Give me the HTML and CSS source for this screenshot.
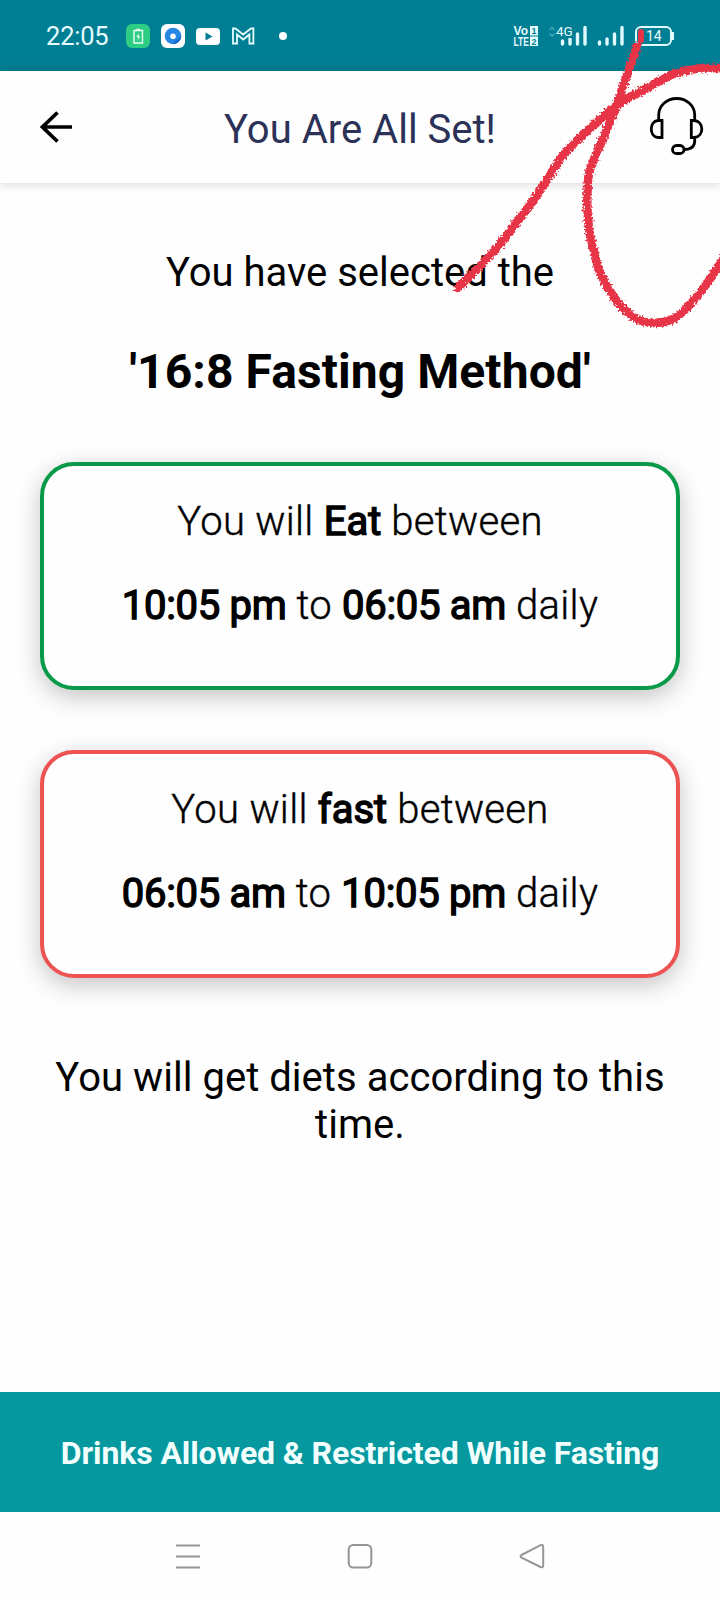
FILE: index.html
```html
<!DOCTYPE html>
<html lang="en">
<head>
<meta charset="utf-8">
<title>You Are All Set!</title>
<link rel="stylesheet" href="styles.css">
</head>
<body>
<div class="screen">
  <div class="status">
    <span class="clock">22:05</span>
    <svg class="status-left" width="164" height="26" viewBox="125 22 164 26">
      <rect x="126" y="23" width="24" height="24" rx="6" fill="#2dcd83"/>
      <path d="M134 29.500h8.500v12.500h-8.500zM136.500 28.500h3.500" fill="none" stroke="#e9fff5" stroke-width="1.400"/>
      <path d="M138.800 32l-2.600 4h2l-.6 3.500 2.800-4.300h-2z" fill="#e9fff5"/>
      <rect x="161" y="23" width="24" height="24" rx="6" fill="#fff"/>
      <circle cx="173" cy="35" r="8.300" fill="#2688e3"/>
      <path d="M173 43.300a8.300 8.300 0 0 0 8.300-8.300c-3 4-6 3-8.300 8.300z" fill="#156bd0"/>
      <circle cx="173" cy="35.300" r="2.800" fill="#fff"/>
      <rect x="196" y="27" width="24" height="17" rx="4" fill="#fff"/>
      <path d="M205.500 31.500v8l7-4z" fill="#007d93"/>
      <path d="M233 42.500v-15h2.500l7.700 6 7.700-6h2.500v15h-4v-9l-6.200 5-6.200-5v9z" fill="none" stroke="#e6fcff" stroke-width="1.800"/>
      <circle cx="283" cy="35" r="4" fill="#fff"/>
    </svg>
    <div class="status-right">
      <svg class="volte" width="25" height="24" viewBox="513 23 25 24">
        <rect x="530" y="25" width="8" height="9.500"/><rect x="530" y="35.500" width="8" height="9.500"/>
        <text x="513.500" y="34" textLength="14.500" lengthAdjust="spacingAndGlyphs">Vo</text>
        <text x="513.500" y="45" textLength="15.500" lengthAdjust="spacingAndGlyphs">LTE</text>
        <text class="sim" x="534" y="33">1</text>
        <text class="sim" x="534" y="43.500">2</text>
      </svg>
      <div class="network">
        <svg width="39" height="24" viewBox="547 23 39 24">
          <path d="M548.500 29l2.500-2.500 2.500 2.500M548.500 32.500l2.500 2.500 2.500-2.500" fill="none" stroke="#4faab8" stroke-width="1.300"/>
          <path d="M561.500 40v3M569 38v5M576.500 33v10M584 26.500v16.500" stroke="#e0fbff" stroke-width="3.400" stroke-linecap="round"/>
        </svg>
        <span class="gen">4G</span>
      </div>
      <svg width="28" height="24" viewBox="597 23 28 24"><path d="M599.500 41v2M607 38v5M614.500 33v10M622 26.500v16.500" stroke="#e0fbff" stroke-width="3.400" stroke-linecap="round"/></svg>
      <div class="battery"><i class="level"></i>14</div>
    </div>
  </div>

  <header class="topbar">
    <svg width="34" height="34" viewBox="40 110 34 34"><path d="M72 127H42M57.500 112.500L42.500 127l15 14.500" fill="none" stroke="#000" stroke-width="3.700"/></svg>
    <h1 class="title">You Are All Set!</h1>
    <svg class="support" width="56" height="60" viewBox="649 95 56 60" fill="none" stroke="#000" stroke-width="2.800">
      <path d="M658.700 119v-5a18 16.500 0 0 1 36 0v5M662 119.500h-4c-9 1-9 16 0 17h4zM691.300 119.500h3c10 1 10 16 0 17h-3zM694.700 137v3c0 6-4 8.500-11 8.500"/>
      <rect x="672.500" y="144.500" width="11.500" height="8" rx="4"/>
    </svg>
  </header>

  <main class="content">
    <p class="lead">You have selected the</p>
    <h2 class="method">'16:8 Fasting Method'</h2>
    <section class="card eat">
      <p>You will <b>Eat</b> between</p>
      <p class="hours"><b>10:05 pm</b> to <b>06:05 am</b> daily</p>
    </section>
    <section class="card fast">
      <p>You will <b>fast</b> between</p>
      <p class="hours"><b>06:05 am</b> to <b>10:05 pm</b> daily</p>
    </section>
    <p class="note">You will get diets according to this time.</p>
  </main>

  <div class="action">Drinks Allowed &amp; Restricted While Fasting</div>
  <nav class="nav">
    <svg width="26" height="26" viewBox="0 0 26 26"><path d="M1 2.500h24M1 13.500h24M1 24.500h24"/></svg>
    <svg width="26" height="26" viewBox="0 0 26 26"><rect x="1.700" y="2" width="22.600" height="22.600" rx="4.500"/></svg>
    <svg width="26" height="26" viewBox="0 0 26 26"><path d="M2.500 12L21.500 2.200Q24.200 1.200 24.200 4V22.500Q24.200 25.200 21.500 24L2.500 14.700Q.5 13.300 2.500 12z"/></svg>
  </nav>

  <svg class="scribble" width="720" height="340" viewBox="0 0 720 340">
    <filter id="rough" x="-10%" y="-10%" width="120%" height="120%">
      <feTurbulence type="fractalNoise" baseFrequency=".5" numOctaves="2" seed="4"/>
      <feDisplacementMap in="SourceGraphic" scale="7" xChannelSelector="R" yChannelSelector="G"/>
    </filter>
    <g filter="url(#rough)">
      <path d="M458 288C469 276 480 267 491 254C501 244 509 233 518 220C528 209 536 197 544 184C551 174 557 163 564 154C573 143 584 134 594 125L612 109C618 104 622 102 628 98C642 91 654 84 671 75C688 68 704 68 728 68"/>
      <path d="M637 46C634 56 631 63 628 72C624 83 621 91 618 102C614 112 610 121 606 132C602 142 597 150 594 159C590 169 588 174 588 182C587 195 587 206 588 218C589 231 591 241 594 251C596 262 599 272 604 281C608 289 613 296 619 304C625 310 629 315 635 318C641 321 647 323 654 323C663 323 671 321 678 316C686 310 692 302 698 295C707 285 715 272 724 257"/>
    </g>
  </svg>
</div>
</body>
</html>
```
FILE: styles.css
```css
* { box-sizing: border-box; }
body { margin: 0; background: #fff; }
p, h1, h2 { margin: 0; }
.screen {
  position: relative;
  width: 720px;
  height: 1600px;
  display: flex;
  flex-direction: column;
  overflow: hidden;
  background: #fefefe;
  color: #000;
  font-family: Roboto, sans-serif;
}
.status {
  height: 71px;
  flex: none;
  display: flex;
  align-items: center;
  padding: 0 48px 0 46px;
  background: #007e93;
  color: #e6fcff;
}
.clock { width: 79px; font-size: 25.500px; line-height: 30px; letter-spacing: -.2px; white-space: nowrap; }
.status-left { display: block; }
.status-right { margin-left: auto; display: flex; align-items: center; gap: 10px; }
.volte { fill: #e6fcff; font: bold 13px "Liberation Sans", sans-serif; }
.volte .sim { fill: #007e93; font-size: 9px; text-anchor: middle; }
.network { position: relative; height: 24px; }
.gen { position: absolute; left: 8px; top: 1px; font-size: 13.500px; line-height: 13px; background: #007e93; }
.battery {
  position: relative;
  width: 37px;
  height: 20px;
  border: 2px solid #e0fbff;
  border-radius: 6px;
  font-size: 14px;
  line-height: 16px;
  display: flex;
  align-items: center;
  gap: 2px;
  padding-left: 1px;
}
.level { width: 6px; height: 14px; border-radius: 3px; background: #e73547; }
.battery::after { content: ""; position: absolute; right: -4px; top: 4px; width: 2px; height: 8px; background: #e0fbff; }
.topbar {
  height: 112px;
  flex: none;
  display: flex;
  align-items: center;
  justify-content: space-between;
  padding: 0 15px 0 40px;
  background: #fefefe;
  box-shadow: 0 1px 10px rgba(0,0,0,.17);
}
.title { font-size: 40px; line-height: 47px; font-weight: 400; color: #2b3157; white-space: nowrap; padding: 4px 3px 0 0; }
.support { margin-top: -3px; }
.content { flex: 1; padding: 66px 40px 0; text-align: center; font-size: 40px; line-height: 47px; }
.lead, .method, .card p { white-space: nowrap; }
.method { margin-top: 48px; font-size: 48px; line-height: 56px; letter-spacing: .08px; }
.card {
  height: 228px;
  padding-top: 32px;
  border: 4px solid;
  border-radius: 34px;
  background: #fefefe;
  box-shadow: 0 7px 24px rgba(0,0,0,.23);
  font-weight: 300;
  letter-spacing: .3px;
  -webkit-text-stroke: .4px #000;
}
.card b { font-weight: 400; letter-spacing: 0; -webkit-text-stroke: 1.400px #000; }
.card .hours b { letter-spacing: -.3px; }
.eat { margin-top: 62px; border-color: #089a48; }
.fast { margin-top: 60px; border-color: #ee5353; }
.hours { margin-top: 37px; }
.note { margin-top: 76px; letter-spacing: .04px; }
.action {
  height: 120px;
  flex: none;
  display: flex;
  align-items: center;
  justify-content: center;
  padding-top: 2px;
  background: #05989f;
  color: #f2ffff;
  font-size: 32px;
  font-weight: 700;
  letter-spacing: -.11px;
  white-space: nowrap;
}
.nav { height: 88px; flex: none; display: flex; align-items: center; justify-content: space-between; padding: 0 175px; }
.nav svg { fill: none; stroke: #969696; stroke-width: 2; }
.scribble { position: absolute; left: 0; top: 0; pointer-events: none; }
.scribble path { fill: none; stroke: #e73547; stroke-width: 8.500; stroke-linecap: round; stroke-linejoin: round; }
```
